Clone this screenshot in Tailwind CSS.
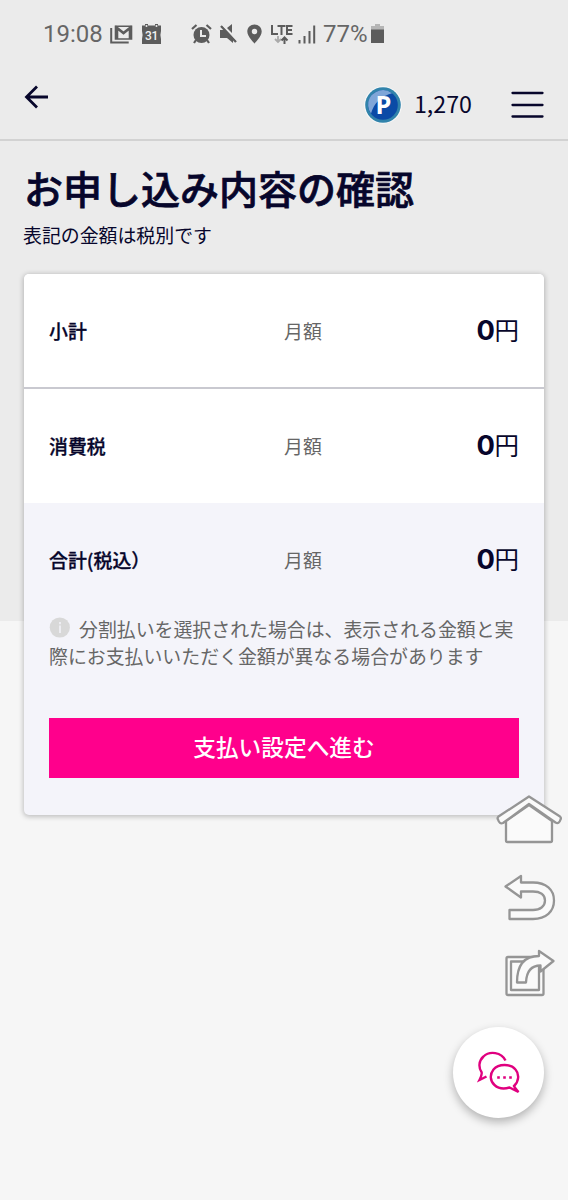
<!DOCTYPE html>
<html lang="ja">
<head>
<meta charset="utf-8">
<meta name="viewport" content="width=device-width, initial-scale=1">
<title>お申し込み内容の確認</title>
<script src="https://cdn.jsdelivr.net/npm/@tailwindcss/browser@4"></script>
</head>
<body class="relative h-[1200px] w-[568px] overflow-hidden bg-[linear-gradient(#ebebeb_621px,#f6f6f6_621px)] font-['Noto_Sans_CJK_JP',sans-serif] text-[#07062b]">
<!-- Status bar -->
<div class="flex h-[68px] items-center pl-[43px] font-['Roboto',sans-serif] text-[24px] leading-none text-[#666]">
  <span class="w-[67px] shrink-0">19:08</span>
  <svg class="h-[20px] w-[23px] shrink-0" viewBox="0 0 23 20" fill="none" stroke="#5c5c5c"><path d="M1.200 4v14.500h17.500" stroke-width="2"/><path d="M5.500 15V2.300h16V15z" stroke-width="1.600"/><path d="M7 15V4l6.500 5L20 4v11" stroke-width="2.600"/></svg>
  <svg class="ml-[8px] h-[22px] w-[21px] shrink-0" viewBox="0 0 21 22"><path d="M1 2.500h3V1h3v1.500h7V1h3v1.500h3V8l-.6 4 .6 4v5H1v-5l.6-4L1 8z" fill="#5c5c5c"/><circle cx="5.500" cy="3" r="1" fill="#ebebeb"/><circle cx="15.500" cy="3" r="1" fill="#ebebeb"/><text x="10.500" y="16.700" text-anchor="middle" font-family="Roboto" font-weight="500" font-size="12" letter-spacing="-0.300" fill="#f2f2f2">31</text></svg>
  <svg class="ml-[29px] h-[20px] w-[21px] shrink-0" viewBox="0 0 21 20"><circle cx="10.500" cy="11" r="8" fill="#5c5c5c"/><path d="M1 5l4.500-4M20 5l-4.500-4M5 16l-2 3M16 16l2 3" stroke="#5c5c5c" stroke-width="2.200"/><path d="M10 6v6h5" fill="none" stroke="#ebebeb" stroke-width="2"/></svg>
  <svg class="ml-[7px] h-[20px] w-[19px] shrink-0" viewBox="0 0 19 20"><path d="M1 6h4.500L14 14v5l-6-5H1zM8 4l5-4v9z" fill="#5c5c5c"/><path d="M2 2l15 16" stroke="#5c5c5c" stroke-width="2.400"/><path d="M3.500 1l15 16" stroke="#ebebeb" stroke-width="1"/></svg>
  <svg class="ml-[9px] h-[20px] w-[15px] shrink-0" viewBox="0 0 15 20"><path d="M7.500.5C3.500.5.3 3.600.3 7.600.3 12.500 7.500 19.500 7.500 19.500s7.200-7 7.200-11.900c0-4-3.200-7.100-7.200-7.100z" fill="#5c5c5c"/><circle cx="7.500" cy="7.500" r="2.700" fill="#ebebeb"/></svg>
  <svg class="ml-[8px] h-[22px] w-[24px] shrink-0" viewBox="0 0 24 22" fill="none" stroke="#5c5c5c" stroke-width="2"><path d="M2 2v9h6M7.500 3h8M11.500 3v9M22.500 3h-5.500v8h5.500M17 7h5"/><path d="M8 13v6M5 16l3 3 3-3" stroke="#aaa" stroke-width="1.800"/><path d="M14.500 21v-6M11.500 17.500l3-3 3 3"/></svg>
  <svg class="ml-[4px] h-[20px] w-[18px] shrink-0" viewBox="0 0 18 20" stroke="#5c5c5c" stroke-width="2"><path d="M1.500 16v3.500M6.500 12v7.500M11.500 7v12.500M16.200 1.500v18"/></svg>
  <span class="ml-[7px] w-[48px] shrink-0">77%</span>
  <svg class="h-[20px] w-[13px] shrink-0" viewBox="0 0 13 20"><path d="M4 0h5v2h4v5H0V2h4z" fill="#b5b5b5"/><path d="M0 5.500h13V19H0z" fill="#5c5c5c"/></svg>
</div>
<!-- App header -->
<header class="flex h-[73px] items-center border-b-2 border-[#d2d2d2] pl-[24px]">
  <svg class="-mt-[14px] h-[24px] w-[25px]" viewBox="0 0 25 24" fill="none" stroke="#07062b" stroke-width="2.800"><path d="M24 12H2.500M13 1.500L2.500 12 13 22.500"/></svg>
  <svg class="ml-[315px] mt-[2px] h-[38px] w-[38px]" viewBox="0 0 38 38">
    <circle cx="19" cy="19" r="18.800" fill="#fff" opacity=".7"/><circle cx="19" cy="19" r="17.800" fill="#3183ab"/><circle cx="19" cy="19" r="14.800" fill="#0b4aa6"/><path d="M4.200 20A14.800 14.800 0 0 1 28 7.200C17 10 10 17 7 27.500A14.800 14.800 0 0 1 4.200 20z" fill="#7fa6d8"/>
    <text x="19.500" y="27.500" text-anchor="middle" font-family="Noto Sans" font-weight="700" font-size="25.500" fill="#fff">P</text>
  </svg>
  <span class="ml-[12px] mt-px w-[97px] text-[23.200px] leading-none">1,270</span>
  <svg class="mt-[2px] h-[28px] w-[33px]" viewBox="0 0 33 28" stroke="#07062b" stroke-width="2.300" stroke-linecap="round"><path d="M1.500 2h30M1.500 14h30M1.500 25.500h30"/></svg>
</header>
<main class="px-[24px]">
  <h1 class="mt-[17px] h-[61px] whitespace-nowrap text-[39px] font-medium leading-[58px] [-webkit-text-stroke:0.7px_#07062b]">お申し込み内容の確認</h1>
  <p class="-ml-px mt-[2px] h-[28px] text-[18.900px] leading-[28px]">表記の金額は税別です</p>
  <section class="mt-[25px] h-[541px] overflow-hidden rounded-[5px] bg-[#f4f4fa] shadow-[0_1px_5px_1px_rgba(0,0,0,0.22)]">
    <div class="flex h-[115px] items-center border-b-2 border-[#c9c9d0] bg-white px-[25px] pt-[2px]">
      <span class="w-[235px] text-[18.900px] font-medium [-webkit-text-stroke:0.3px_#07062b]">小計</span><span class="text-[18.900px] text-[#666]">月額</span>
      <span class="-mt-[2px] ml-auto flex items-center leading-none"><b class="origin-right scale-x-[1.03] font-['Inter',sans-serif] text-[26.500px]">0</b><span class="text-[24.500px]">円</span></span>
    </div>
    <div class="flex h-[114px] items-center bg-white px-[25px]">
      <span class="w-[235px] text-[18.900px] font-medium [-webkit-text-stroke:0.3px_#07062b]">消費税</span><span class="text-[18.900px] text-[#666]">月額</span>
      <span class="-mt-[2px] ml-auto flex items-center leading-none"><b class="origin-right scale-x-[1.03] font-['Inter',sans-serif] text-[26.500px]">0</b><span class="text-[24.500px]">円</span></span>
    </div>
    <div class="flex h-[113px] items-center px-[25px] pt-px">
      <span class="w-[235px] text-[18.900px] font-medium [-webkit-text-stroke:0.3px_#07062b]">合計(税込）</span><span class="text-[18.900px] text-[#666]">月額</span>
      <span class="-mt-[2px] ml-auto flex items-center leading-none"><b class="origin-right scale-x-[1.03] font-['Inter',sans-serif] text-[26.500px]">0</b><span class="text-[24.500px]">円</span></span>
    </div>
    <div class="-mt-px px-[25px] text-[18.900px] leading-[27px] text-[#666]">
      <div class="flex items-center whitespace-nowrap"><svg class="-mt-[2px] mr-[9px] h-[21px] w-[21px] shrink-0" viewBox="0 0 21 21"><circle cx="10.800" cy="10.500" r="10.100" fill="#d8d8d8"/><path d="M11 5v2.200M11 8.500V16" stroke="#f4f4fa" stroke-width="1.500"/></svg>分割払いを選択された場合は、表示される金額と実</div>
      <div class="whitespace-nowrap">際にお支払いいただく金額が異なる場合があります</div>
    </div>
    <button class="mx-[25px] mt-[49px] block h-[60px] w-[470px] bg-[#ff008c] pb-[2px] text-[22.700px] font-medium leading-[58px] text-white">支払い設定へ進む</button>
  </section>
</main>
<!-- Floating shortcuts over the page -->
<svg class="absolute left-[490px] top-[790px] h-[212px] w-[78px]" viewBox="490 790 78 212" fill="#fafafa" stroke="#959595" stroke-width="2.300" stroke-linejoin="round">
  <path d="M506 821l23-16 23 16v19.500q0 1.500-1.500 1.500h-43q-1.500 0-1.500-1.500z"/>
  <path d="M498 819.500q-1-1.500.5-3L529 796.500l31 20q1.500 1.500.5 3-1.500 5-5 3L529 804l-26 19q-3.500 1.500-5-3.500z"/>
  <path d="M505.500 886.500L521 876v6.500h12c13 0 21 7 21 18s-8 18.500-21 18.500h-23.500v-9H533c7 0 12-3.500 12-9.500s-5-9-12-9h-12v6z"/>
  <path d="M508 957h34q1.500 0 1.500 1.500v35q0 1.500-1.500 1.500h-34q-1.500 0-1.500-1.500v-35q0-1.500 1.500-1.500z"/><path d="M511 961.500h28v28.500h-28z"/>
  <path d="M517 982.500c0-18 8-26.500 22-26.500v-5l14.500 10-13 10.500v-6c-9 0-14 6-14.500 17z"/>
</svg>
<div class="absolute left-[453px] top-[1027px] flex h-[91px] w-[91px] items-center justify-center rounded-full bg-white shadow-[0_4px_10px_rgba(0,0,0,0.28)]">
  <svg class="-mt-px h-[44px] w-[44px]" viewBox="476.500 1050 44 44" fill="none" stroke="#e0007f" stroke-width="2.400">
    <path d="M505 1060.500C501 1052 489 1050.500 483 1056.500c-5 4.500-5 11-2 15.500.7 1.500 0 4-2 8l7-3.500"/>
    <path d="M513.500 1086c5-4.500 5.500-12 1.500-16.500-5-6-17-6-22 0-4 5-3.500 11.500 1 15.500 4 3.700 9.500 4.200 15 2.500l9 4.500c-2.500-3-4-4.500-4.500-6z"/>
    <path d="M496.700 1077.500h2.600M502.700 1077.500h2.600M508.700 1077.500h2.600" stroke-width="2.600"/>
  </svg>
</div>
</body>
</html>
